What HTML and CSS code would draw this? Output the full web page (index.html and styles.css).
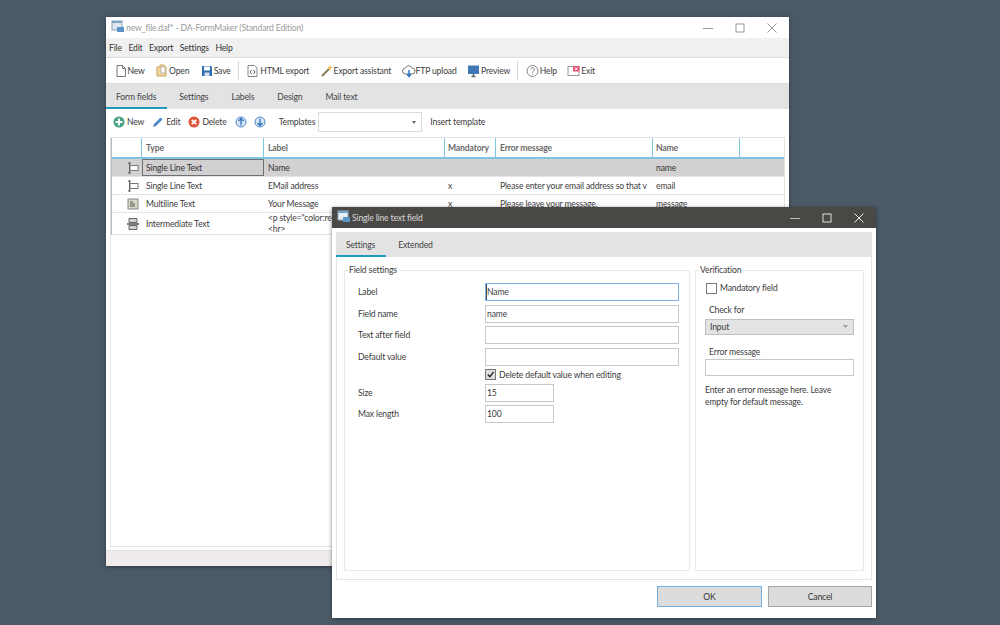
FILE: index.html
```html
<!DOCTYPE html>
<html lang="en">
<head>
<meta charset="utf-8">
<title>DA-FormMaker</title>
<link rel="stylesheet" href="styles.css">
</head>
<body>
<section class="window main">
  <header class="titlebar">
    <svg class="ico" viewBox="0 0 14 14"><rect x="1" y="1" width="10" height="9" fill="#dfe8ef" stroke="#8aa4b8"/><rect x="1" y="1" width="10" height="2" fill="#7ba6c6"/><rect x="6" y="7" width="7" height="5" fill="#5b93c4"/></svg>
    <span class="title">new_file.daf* - DA-FormMaker (Standard Edition)</span>
    <div class="winctl">
      <svg viewBox="0 0 10 10"><path d="M0 5.500h10" stroke="#999" fill="none"/></svg>
      <svg viewBox="0 0 10 10"><rect x="1" y="1" width="8" height="8" stroke="#999" fill="none"/></svg>
      <svg viewBox="0 0 10 10"><path d="M.5.5l9 9M9.500.5l-9 9" stroke="#999" fill="none"/></svg>
    </div>
  </header>
  <nav class="menubar"><span>File</span><span>Edit</span><span>Export</span><span>Settings</span><span>Help</span></nav>
  <div class="toolbar">
    <span class="tool"><svg class="ico" viewBox="0 0 14 14"><path d="M3 1.500h5.500l3 3v8h-8.500z" fill="#fff" stroke="#777"/><path d="M8.500 1.500v3h3" fill="none" stroke="#777"/></svg>New</span>
    <span class="tool"><svg class="ico" viewBox="0 0 14 14"><path d="M2 3h3V1h4l2 2v9H2z" fill="#f0d59a" stroke="#c9a45c"/><path d="M6 3h4v6H6z" fill="#fff" stroke="#b9b9b9"/></svg>Open</span>
    <span class="tool"><svg class="ico" viewBox="0 0 14 14"><path d="M2 2h9l1 1v9H2z" fill="#2f6db5"/><rect x="4" y="2.500" width="6" height="4" fill="#fff"/><rect x="4.500" y="8.500" width="5" height="3.500" fill="#cfe0f0"/></svg>Save</span>
    <span class="sep"></span>
    <span class="tool"><svg class="ico" viewBox="0 0 14 14"><path d="M2 1.500h6.500l2.500 2.500v8.500H2z" fill="#fff" stroke="#888"/><path d="M5.500 6L4 8l1.500 2M7.500 6L9 8l-1.500 2" fill="none" stroke="#666"/></svg>HTML export</span>
    <span class="tool"><svg class="ico" viewBox="0 0 14 14"><path d="M2 12l7-7" stroke="#8a7a55" stroke-width="2"/><path d="M10 1l.8 2 2 .8-2 .8-.8 2-.8-2-2-.8 2-.8z" fill="#eeb544"/></svg>Export assistant</span>
    <span class="tool"><svg class="ico" viewBox="0 0 14 14"><path d="M3.500 10a3 3 0 0 1 0-6 3.500 3.500 0 0 1 6.500 0 3 3 0 0 1 0 6z" fill="#fff" stroke="#777"/><path d="M7 6v6M5 10l2 2.500 2-2.500" fill="none" stroke="#2f7cc4" stroke-width="1.500"/></svg>FTP upload</span>
    <span class="tool"><svg class="ico" viewBox="0 0 14 14"><rect x="1" y="1.500" width="11" height="8.500" fill="#3f78b5"/><path d="M4.500 12.500h4M6.500 10v2.500" stroke="#666" stroke-width="1.500"/></svg>Preview</span>
    <span class="sep"></span>
    <span class="tool"><svg class="ico" viewBox="0 0 14 14"><circle cx="6.500" cy="7" r="5.500" fill="#fff" stroke="#888"/><path d="M4.800 5.500a1.800 1.800 0 1 1 2.800 1.500c-.7.500-1.100.8-1.100 1.600M6.500 9.800v1" fill="none" stroke="#777"/></svg>Help</span>
    <span class="tool"><svg class="ico" viewBox="0 0 14 14"><rect x="1" y="2.500" width="11" height="9" fill="#fff" stroke="#999"/><rect x="6" y="2" width="6.500" height="5.500" fill="#e8557a"/><path d="M8 3.500l2.500 2.500M10.500 3.500L8 6" stroke="#fff"/></svg>Exit</span>
  </div>
  <div class="tabs">
    <span class="tab active">Form fields</span><span class="tab">Settings</span><span class="tab">Labels</span><span class="tab">Design</span><span class="tab">Mail text</span>
  </div>
  <div class="actions">
    <span class="tool"><svg class="ico" viewBox="0 0 14 14"><circle cx="6" cy="7" r="5.500" fill="#47a07f"/><path d="M6 3.500v7M2.500 7h7" stroke="#fff" stroke-width="2"/></svg>New</span>
    <span class="tool"><svg class="ico" viewBox="0 0 14 14"><path d="M1 12l1-3 6.500-6.500 2 2L4 11z" fill="#4f86c6"/></svg>Edit</span>
    <span class="tool"><svg class="ico" viewBox="0 0 14 14"><circle cx="6" cy="7" r="5.500" fill="#e2553d"/><path d="M3.800 4.800l4.400 4.400M8.200 4.800l-4.400 4.400" stroke="#fff" stroke-width="1.800"/></svg>Delete</span>
    <span class="tool arrow"><svg class="ico" viewBox="0 0 14 14"><circle cx="6" cy="7" r="5" fill="#d9e7f5" stroke="#4f8ac9"/><path d="M6 10.500v-7M3.500 6L6 3.500 8.500 6" fill="none" stroke="#2f74bd" stroke-width="1.300"/></svg></span>
    <span class="tool"><svg class="ico" viewBox="0 0 14 14"><circle cx="6" cy="7" r="5" fill="#d9e7f5" stroke="#4f8ac9"/><path d="M6 3.500v7M3.500 8L6 10.500 8.500 8" fill="none" stroke="#2f74bd" stroke-width="1.300"/></svg></span>
    <span class="tpl-label">Templates</span>
    <span class="combo"><i class="caret"></i></span>
    <span class="tpl-insert">Insert template</span>
  </div>
  <div class="gridwrap">
    <div class="grid">
      <div class="row head">
        <span class="c0"></span><span class="c1">Type</span><span class="c2">Label</span><span class="c3">Mandatory</span><span class="c4">Error message</span><span class="c5">Name</span><span class="c6"></span>
      </div>
      <div class="row sel">
        <span class="c0"><svg class="ico" viewBox="0 0 14 14"><path d="M2 2h3M2 12h3M3.500 2v10" stroke="#555" fill="none"/><rect x="4" y="4.500" width="8" height="5" fill="#fff" stroke="#777"/></svg></span><span class="c1 focus">Single Line Text</span><span class="c2">Name</span><span class="c3"></span><span class="c4"></span><span class="c5">name</span><span class="c6"></span>
      </div>
      <div class="row">
        <span class="c0"><svg class="ico" viewBox="0 0 14 14"><path d="M2 2h3M2 12h3M3.500 2v10" stroke="#555" fill="none"/><rect x="4" y="4.500" width="8" height="5" fill="#fff" stroke="#777"/></svg></span><span class="c1">Single Line Text</span><span class="c2">EMail address</span><span class="c3">x</span><span class="c4">Please enter your email address so that v</span><span class="c5">email</span><span class="c6"></span>
      </div>
      <div class="row">
        <span class="c0"><svg class="ico" viewBox="0 0 14 14"><rect x="2" y="2" width="10" height="10" fill="#d8d8c8" stroke="#888"/><path d="M4 5h3M4 7h5M4 9h5" stroke="#555"/></svg></span><span class="c1">Multiline Text</span><span class="c2">Your Message</span><span class="c3">x</span><span class="c4">Please leave your message.</span><span class="c5">message</span><span class="c6"></span>
      </div>
      <div class="row tall">
        <span class="c0"><svg class="ico" viewBox="0 0 14 14"><path d="M3 1.500h8v4H3zM3 8.500h8v4H3z" fill="#cfcfcf" stroke="#666"/><path d="M1 7h12" stroke="#555" stroke-width="1.500"/></svg></span><span class="c1">Intermediate Text</span><span class="c2 multi">&lt;p style="color:red"&gt;<br>&lt;hr&gt;</span><span class="c3"></span><span class="c4"></span><span class="c5"></span><span class="c6"></span>
      </div>
    </div>
  </div>
  <footer class="statusbar"></footer>
</section>

<section class="window dialog">
  <header class="titlebar dark">
    <svg class="ico" viewBox="0 0 14 14"><rect x="1" y="1" width="10" height="9" fill="#e6eef5" stroke="#9ab"/><rect x="1" y="1" width="10" height="2" fill="#6fa5d0"/><rect x="6" y="7" width="7" height="5" fill="#5b93c4"/></svg>
    <span class="title">Single line text field</span>
    <div class="winctl">
      <svg viewBox="0 0 10 10"><path d="M0 5.500h10" stroke="#bbb" fill="none"/></svg>
      <svg viewBox="0 0 10 10"><rect x="1" y="1" width="8" height="8" stroke="#ddd" fill="none"/></svg>
      <svg viewBox="0 0 10 10"><path d="M.5.5l9 9M9.500.5l-9 9" stroke="#eee" fill="none"/></svg>
    </div>
  </header>
  <div class="dlg-body">
    <div class="tabs dlg-tabs"><span class="tab active">Settings</span><span class="tab">Extended</span></div>
    <div class="panel">
      <fieldset class="group fields">
        <legend>Field settings</legend>
        <div class="form">
          <label>Label</label><input class="wide focused" value="Name">
          <label>Field name</label><input class="wide" value="name">
          <label>Text after field</label><input class="wide" value="">
          <label>Default value</label><input class="wide" value="">
          <span></span><span class="check"><i class="box on"><svg viewBox="0 0 10 10"><path d="M2 5l2.300 2.500L8.500 2" fill="none" stroke="#222" stroke-width="1.500"/></svg></i>Delete default value when editing</span>
          <label>Size</label><input class="narrow" value="15">
          <label>Max length</label><input class="narrow" value="100">
        </div>
      </fieldset>
      <fieldset class="group verify">
        <legend>Verification</legend>
        <span class="check mand"><i class="box"></i>Mandatory field</span>
        <label class="vlabel first">Check for</label>
        <div class="select">Input<i class="chev"></i></div>
        <label class="vlabel second">Error message</label>
        <input class="full" value="">
        <p class="help">Enter an error message here. Leave empty for default message.</p>
      </fieldset>
    </div>
    <div class="buttons"><button class="primary">OK</button><button>Cancel</button></div>
  </div>
</section>
</body>
</html>
```
FILE: styles.css
```css
* { box-sizing: border-box; }
html, body { margin: 0; height: 100%; }
body { width: 1000px; height: 625px; background: #4c5a68; overflow: hidden; position: relative; font: 8.6px/12px Lato, "Open Sans", sans-serif; letter-spacing: -.15px; color: #3c3c3c; }
.window { position: absolute; display: flex; flex-direction: column; background: #fff; box-shadow: 0 1px 4px rgba(20,25,35,.55); }
.main { left: 106px; top: 17px; width: 683px; height: 549px; }
.dialog { left: 332px; top: 207px; width: 544px; height: 411px; background: #fff; }
.ico { width: 14px; height: 14px; flex: none; display: block; }
.titlebar { height: 21px; flex: none; display: flex; align-items: center; padding-left: 5px; gap: 1px; color: #9a9a9a; }
.titlebar .ico { margin-top: -1px; }
.winctl { margin-left: auto; display: flex; align-items: center; gap: 22px; padding-right: 12px; }
.winctl svg { width: 10px; height: 10px; display: block; }
.dark { background: #4a4845; color: #d8d8d8; padding-left: 5px; }
.menubar { height: 20px; flex: none; background: #f0f0f0; border-bottom: 1px solid #dcdcdc; display: flex; align-items: center; gap: 6.500px; padding-left: 3px; color: #333; }
.toolbar { height: 26px; flex: none; display: flex; align-items: center; gap: 10.3px; padding-left: 7.5px; border-bottom: 1px solid #dcdcdc; }
.tool { display: flex; align-items: center; white-space: nowrap; }
.sep { width: 1px; height: 19px; background: #d8d8d8; margin: 0 -3px; }
.tabs { height: 25px; flex: none; background: #e3e3e3; display: flex; align-items: stretch; }
.tab { padding: 0 11px 0 10px; margin-right: 2px; display: flex; align-items: center; color: #444; }
.tab.active { border-bottom: 2px solid #1f9ab8; padding-top: 2px; }
.actions { height: 25px; flex: none; display: flex; align-items: center; gap: 8px; padding-left: 7px; }
.arrow { margin-right: -3px; }
.tpl-label { margin-left: 3px; }
.combo { width: 104px; height: 20px; border: 1px solid #dcdcdc; position: relative; margin-left: -5px; }
.caret { position: absolute; right: 5px; top: 8px; width: 0; height: 0; border: 2px solid transparent; border-top: 3px solid #666; border-bottom: 0; }
.gridwrap { flex: 1; margin: 3px 4px 3px; border: 1px solid #e4e4e4; min-height: 0; }
.grid { display: flex; flex-direction: column; border-left: 1px solid #b8b8b8; }
.row { display: flex; height: 18px; border-bottom: 1px solid #e4e4e4; align-items: stretch; }
.row > span { display: flex; align-items: center; padding-left: 4px; white-space: nowrap; overflow: hidden; flex: none; }
.c0 { width: 30px; }
.row > .c0 { padding-left: 0; justify-content: flex-end; padding-right: 2px; }
.c1 { width: 122px; }
.c2 { width: 181px; }
.c3 { width: 51px; }
.c4 { width: 157px; }
.c5 { width: 87px; }
.row > .c3, .row > .c5 { padding-left: 3px; }
.c6 { flex: 1 !important; }
.head { height: 21px; border-bottom: 2px solid #7fc4e0; color: #6a6a6a; font-weight: 700; }
.head > span { border-right: 1px solid #7fc4e0; }
.head .c6 { border-right: 0; }
.sel { background: #d2d0d0; color: #333; }
.row > .focus { border: 1px solid #6d7074; padding-left: 3px; }
.tall { height: 22px; }
.multi { line-height: 10.5px; }
.statusbar { height: 16px; flex: none; background: #efeceb; border-top: 1px solid #e2e2e2; }
.dlg-body { flex: 1; display: flex; flex-direction: column; padding: 4px 4px 11px; min-height: 0; }
.panel { height: 323px; flex: none; border: 1px solid #e4e4e4; border-top: 0; display: flex; gap: 5px; padding: 7px 7px 8px; }
.group { margin: 0; min-width: 0; border: 1px solid #e3ebf1; border-radius: 1px; padding: 0; display: flex; flex-direction: column; }
.group legend { padding: 0 2px 0 1px; margin-left: 3px; line-height: 12px; color: #3c3c3c; }
.fields { width: 346px; }
.verify { flex: 1; padding: 0 9px; }
.verify legend { margin-left: -6px; }
.form { display: grid; grid-template-columns: 127px 194px; padding: 7px 0 0 13px; row-gap: 3.5px; align-items: center; }
.form .check { height: 11px; }
input { font: inherit; letter-spacing: inherit; color: #3c3c3c; height: 18px; border: 1px solid #c8c8c8; padding: 0 1px; background: #fff; outline: 0; display: block; border-radius: 0; }
.wide { width: 194px; }
.narrow { width: 69px; }
.full { width: 149px; height: 17px; }
.focused { border: 1px solid #7fb3e3; box-shadow: inset 1px 0 #4a4f58; }
.check { display: flex; align-items: center; gap: 3px; }
.box { width: 11px; height: 11px; border: 1px solid #777; background: #fff; flex: none; display: block; }
.box svg { display: block; width: 9px; height: 9px; }
.box.on { background: #e0e0e0; }
.mand { margin-top: 6px; margin-left: 1px; }
.vlabel { display: block; padding-left: 4px; }
.first { margin-top: 10px; margin-bottom: 3px; }
.second { margin-top: 11px; margin-bottom: 1px; }
.select { width: 149px; height: 16px; background: #e3e3e3; border: 1px solid #bfbfbf; position: relative; padding-left: 4px; line-height: 14px; }
.chev { position: absolute; right: 6px; top: 4px; width: 3px; height: 3px; border-right: 1px solid #777; border-bottom: 1px solid #777; transform: rotate(45deg); }
.help { margin: 8px 0 0; width: 149px; }
.buttons { display: flex; justify-content: flex-end; gap: 6px; margin-top: 6px; }
button { font: inherit; letter-spacing: inherit; color: #333; width: 104px; height: 21px; background: #dcdcdc; border: 1px solid #a8a8a8; padding: 0; border-radius: 0; }
.primary { width: 105px; border: 1px solid #6fb0e6; }
```
